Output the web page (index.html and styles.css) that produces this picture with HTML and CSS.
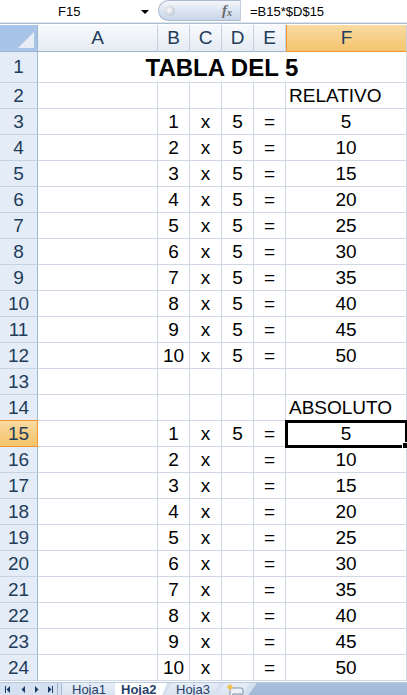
FILE: index.html
```html
<!DOCTYPE html>
<html>
<head>
<meta charset="utf-8">
<link rel="stylesheet" href="styles.css">
</head>
<body>
<div class="app">
  <div class="fbar">
    <div class="namebox"><span class="ref">F15</span><span class="dd"></span></div>
    <div class="capsule"><span class="knob"></span><span class="fx">f<sub>x</sub></span></div>
    <div class="formula">=B15*$D$15</div>
  </div>
  <div class="gap"></div>
  <div class="grid">
    <div class="corner"><span class="tri"></span></div>
    <div class="ch">A</div><div class="ch">B</div><div class="ch">C</div><div class="ch">D</div><div class="ch">E</div><div class="ch sel">F</div>

    <div class="rh r1">1</div><div class="c r1 title">TABLA DEL 5</div>

    <div class="rh">2</div><div class="c"></div><div class="c"></div><div class="c"></div><div class="c"></div><div class="c"></div><div class="c l">RELATIVO</div>
    <div class="rh">3</div><div class="c"></div><div class="c">1</div><div class="c">x</div><div class="c">5</div><div class="c">=</div><div class="c">5</div>
    <div class="rh">4</div><div class="c"></div><div class="c">2</div><div class="c">x</div><div class="c">5</div><div class="c">=</div><div class="c">10</div>
    <div class="rh">5</div><div class="c"></div><div class="c">3</div><div class="c">x</div><div class="c">5</div><div class="c">=</div><div class="c">15</div>
    <div class="rh">6</div><div class="c"></div><div class="c">4</div><div class="c">x</div><div class="c">5</div><div class="c">=</div><div class="c">20</div>
    <div class="rh">7</div><div class="c"></div><div class="c">5</div><div class="c">x</div><div class="c">5</div><div class="c">=</div><div class="c">25</div>
    <div class="rh">8</div><div class="c"></div><div class="c">6</div><div class="c">x</div><div class="c">5</div><div class="c">=</div><div class="c">30</div>
    <div class="rh">9</div><div class="c"></div><div class="c">7</div><div class="c">x</div><div class="c">5</div><div class="c">=</div><div class="c">35</div>
    <div class="rh">10</div><div class="c"></div><div class="c">8</div><div class="c">x</div><div class="c">5</div><div class="c">=</div><div class="c">40</div>
    <div class="rh">11</div><div class="c"></div><div class="c">9</div><div class="c">x</div><div class="c">5</div><div class="c">=</div><div class="c">45</div>
    <div class="rh">12</div><div class="c"></div><div class="c">10</div><div class="c">x</div><div class="c">5</div><div class="c">=</div><div class="c">50</div>
    <div class="rh">13</div><div class="c"></div><div class="c"></div><div class="c"></div><div class="c"></div><div class="c"></div><div class="c"></div>
    <div class="rh">14</div><div class="c"></div><div class="c"></div><div class="c"></div><div class="c"></div><div class="c"></div><div class="c l">ABSOLUTO</div>
    <div class="rh sel">15</div><div class="c"></div><div class="c">1</div><div class="c">x</div><div class="c">5</div><div class="c">=</div><div class="c active">5</div>
    <div class="rh">16</div><div class="c"></div><div class="c">2</div><div class="c">x</div><div class="c"></div><div class="c">=</div><div class="c">10</div>
    <div class="rh">17</div><div class="c"></div><div class="c">3</div><div class="c">x</div><div class="c"></div><div class="c">=</div><div class="c">15</div>
    <div class="rh">18</div><div class="c"></div><div class="c">4</div><div class="c">x</div><div class="c"></div><div class="c">=</div><div class="c">20</div>
    <div class="rh">19</div><div class="c"></div><div class="c">5</div><div class="c">x</div><div class="c"></div><div class="c">=</div><div class="c">25</div>
    <div class="rh">20</div><div class="c"></div><div class="c">6</div><div class="c">x</div><div class="c"></div><div class="c">=</div><div class="c">30</div>
    <div class="rh">21</div><div class="c"></div><div class="c">7</div><div class="c">x</div><div class="c"></div><div class="c">=</div><div class="c">35</div>
    <div class="rh">22</div><div class="c"></div><div class="c">8</div><div class="c">x</div><div class="c"></div><div class="c">=</div><div class="c">40</div>
    <div class="rh">23</div><div class="c"></div><div class="c">9</div><div class="c">x</div><div class="c"></div><div class="c">=</div><div class="c">45</div>
    <div class="rh">24</div><div class="c"></div><div class="c">10</div><div class="c">x</div><div class="c"></div><div class="c">=</div><div class="c">50</div>
  </div>
  <div class="tabbar">
    <div class="nav">
      <svg width="56" height="14" viewBox="0 0 56 14">
        <rect x="5" y="3" width="1" height="7" fill="#1d3a66"/>
        <path d="M10 3 L6.5 6.5 L10 10 Z" fill="#1d3a66"/>
        <path d="M25 3 L21.5 6.5 L25 10 Z" fill="#1d3a66"/>
        <path d="M35 3 L38.5 6.5 L35 10 Z" fill="#1d3a66"/>
        <path d="M48 3 L51.5 6.5 L48 10 Z" fill="#1d3a66"/>
        <rect x="52" y="3" width="1" height="7" fill="#1d3a66"/>
      </svg>
    </div>
    <div class="tab t1">Hoja1</div>
    <div class="tab t2">Hoja2</div>
    <div class="tab t3">Hoja3</div>
    <div class="tab t4">
      <svg width="20" height="14" viewBox="0 0 20 14">
        <path d="M5 5 h11 a2 2 0 0 1 2 2 v4 h-10 l-3 3 v-3 z" fill="#eef2f8" stroke="#7d8ea8" stroke-width="1"/>
        <circle cx="5" cy="4" r="2.2" fill="#f6b93b"/>
        <path d="M5 0.5 v7 M1.5 4 h7" stroke="#f6c65a" stroke-width="1"/>
      </svg>
    </div>
    <div class="rest"></div>
  </div>
</div>
</body>
</html>
```
FILE: styles.css
```css
* { box-sizing: border-box; }
html, body { margin: 0; padding: 0; background: #fff; overflow: hidden; }
body { width: 407px; height: 695px; font-family: "Liberation Sans", Arial, sans-serif; }
.app { width: 407px; height: 695px; display: flex; flex-direction: column; overflow: hidden; }

.fbar { height: 23px; display: flex; align-items: stretch; border-bottom: 1px solid #dfe3e8; background: #fff; flex: none; }
.namebox { width: 158px; display: flex; align-items: center; position: relative; font-size: 13px; color: #000; }
.namebox .ref { margin-left: 58px; }
.namebox .dd { position: absolute; left: 141px; top: 10px; width: 0; height: 0; border-left: 4px solid transparent; border-right: 4px solid transparent; border-top: 4px solid #000; }
.capsule { width: 83px; margin: 0 0 1px; border-radius: 11px 0 0 11px; background: linear-gradient(#f4f7fb, #d9e3f0 55%, #c9d6e8); border: 1px solid #a9b9cf; border-right: 1px solid #c5cfdc; position: relative; }
.capsule .knob { position: absolute; left: 6px; top: 5px; width: 10px; height: 10px; border-radius: 50%; background: radial-gradient(circle at 40% 40%, #fdfdfd, #aab4c2); }
.capsule .fx { position: absolute; right: 8px; top: 1px; font-family: "Liberation Serif", serif; font-style: italic; font-weight: bold; font-size: 15px; color: #6a6a6a; }
.capsule .fx sub { font-size: 10px; vertical-align: -1px; }
.formula { padding-left: 9px; font-size: 13px; display: flex; align-items: center; color: #000; }

.gap { height: 2px; border-top: 1px solid #a9bfd6; flex: none; background: #fff; }

.grid { display: grid; grid-template-columns: 38px 120px 32px 32px 32px 32px 121px; grid-template-rows: 27px 31px repeat(23, 26px); flex: none; }
.corner { background: #a9c4e9; border-right: 1px solid #9eb6ce; border-bottom: 1px solid #9eb6ce; position: relative; }
.corner .tri { position: absolute; right: 3px; bottom: 3px; width: 0; height: 0; border-left: 16px solid transparent; border-bottom: 16px solid #e9eef5; }
.ch { background: linear-gradient(#f8fafd, #e5ebf3); border-right: 1px solid #c5d1de; border-bottom: 1px solid #9eb6ce; display: flex; align-items: center; justify-content: center; font-size: 19px; color: #223c5a; }
.ch.sel { background: linear-gradient(#f9dba4, #f4c56d); border-bottom: 1px solid #f29536; border-left: 1px solid #f29536; }
.rh { background: #e4ecf7; border-right: 1px solid #9eb6ce; border-bottom: 1px solid #c5d2e2; display: flex; align-items: center; justify-content: center; font-size: 19px; color: #223c5a; }
.rh.sel { background: linear-gradient(#f9d9a0, #f4c46a); border-right: 1px solid #f29536; border-bottom: 1px solid #f29536; border-top: 1px solid #f29536; margin-top: -1px; }
.c { border-right: 1px solid #d0d7e5; border-bottom: 1px solid #d0d7e5; display: flex; align-items: center; justify-content: center; font-size: 19px; color: #000; padding-top: 1px; }
.c.l { justify-content: flex-start; padding-left: 3px; }
.c.title { grid-column: 2 / 8; font-weight: bold; font-size: 24px; padding-top: 2px; }
.c.active { position: relative; outline: 3px solid #000; outline-offset: -2px; }
.c.active::after { content: ""; position: absolute; right: -3px; bottom: -3px; width: 5px; height: 5px; background: #000; border: 1px solid #fff; }

.tabbar { height: 20px; margin-top: 1px; display: flex; align-items: stretch; background: #d5e1f0; border-top: 1px solid #b8c9df; flex: none; }
.nav { width: 58px; border-right: 1px solid #9fb2ca; }
.nav svg { display: block; margin-top: 0; }
.tab { font-size: 13px; line-height: 13px; color: #26406a; display: flex; align-items: flex-start; padding-top: 0; }
.t1 { width: 54px; margin-left: 3px; padding-left: 10px; background: linear-gradient(#e6edf7, #d2ddec); border-left: 1px solid #a9bbd4; }
.t2 { width: 52px; padding-left: 6px; background: #fff; font-weight: bold; clip-path: polygon(0 0, 100% 0, 85% 100%, 0 100%); }
.t3 { width: 60px; margin-left: -8px; padding-left: 17px; background: linear-gradient(#e6edf7, #d2ddec); clip-path: polygon(14px 0, 100% 0, 86% 100%, 0 100%); }
.t4 { width: 38px; margin-left: -8px; padding-left: 14px; background: linear-gradient(#e6edf7, #d2ddec); clip-path: polygon(14px 0, 100% 0, 76% 100%, 0 100%); }
.rest { flex: 1; margin-left: -6px; background: linear-gradient(#a8bedb, #9fb6d5); clip-path: polygon(14px 0, 100% 0, 100% 100%, 0 100%); }
```
